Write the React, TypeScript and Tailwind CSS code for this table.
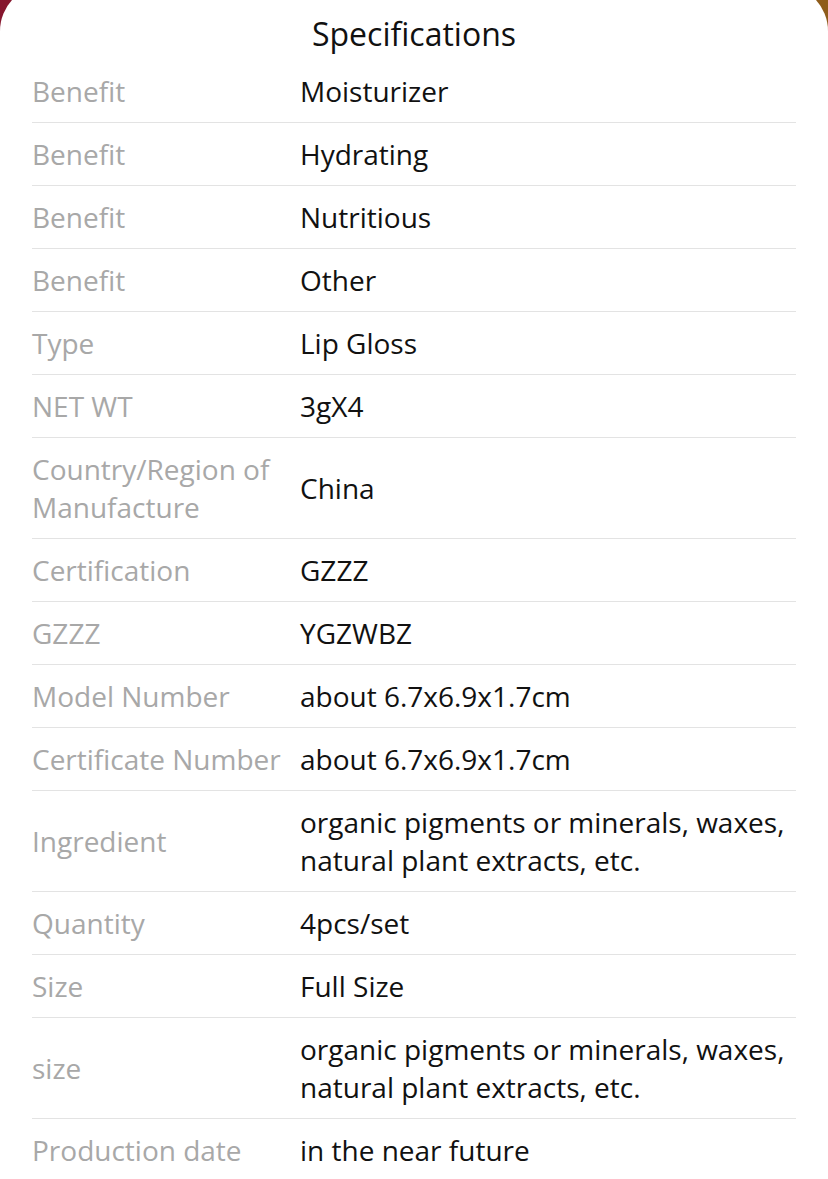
import React from "react";

const rows: [string, string][] = [
  ["Benefit", "Moisturizer"],
  ["Benefit", "Hydrating"],
  ["Benefit", "Nutritious"],
  ["Benefit", "Other"],
  ["Type", "Lip Gloss"],
  ["NET WT", "3gX4"],
  ["Country/Region of Manufacture", "China"],
  ["Certification", "GZZZ"],
  ["GZZZ", "YGZWBZ"],
  ["Model Number", "about 6.7x6.9x1.7cm"],
  ["Certificate Number", "about 6.7x6.9x1.7cm"],
  ["Ingredient", "organic pigments or minerals, waxes, natural plant extracts, etc."],
  ["Quantity", "4pcs/set"],
  ["Size", "Full Size"],
  ["size", "organic pigments or minerals, waxes, natural plant extracts, etc."],
  ["Production date", "in the near future"],
];

export default function App() {
  return (
    <div
      className="w-[828px] h-[1179px] overflow-hidden bg-gradient-to-r from-[#86162e] via-[#8a3a26] to-[#8e5c1a]"
      style={{ fontFamily: '"Open Sans", "Noto Sans", sans-serif' }}
    >
      <div className="bg-white rounded-t-[46px] h-[1240px] -mt-[15px] px-[32px]">
        <div className="h-[75px] pt-[23px] flex items-center justify-center text-[32px] text-[#111]">
          Specifications
        </div>
        {rows.map(([k, v], i) => (
          <div
            key={i}
            className="flex items-center py-[12px] border-b border-[#e3e3e3] text-[28px] leading-[38px]"
          >
            <div className="w-[268px] shrink-0 pr-[8px] text-[#a8a8a8]">{k}</div>
            <div className="flex-1 text-[#111]">{v}</div>
          </div>
        ))}
      </div>
    </div>
  );
}
